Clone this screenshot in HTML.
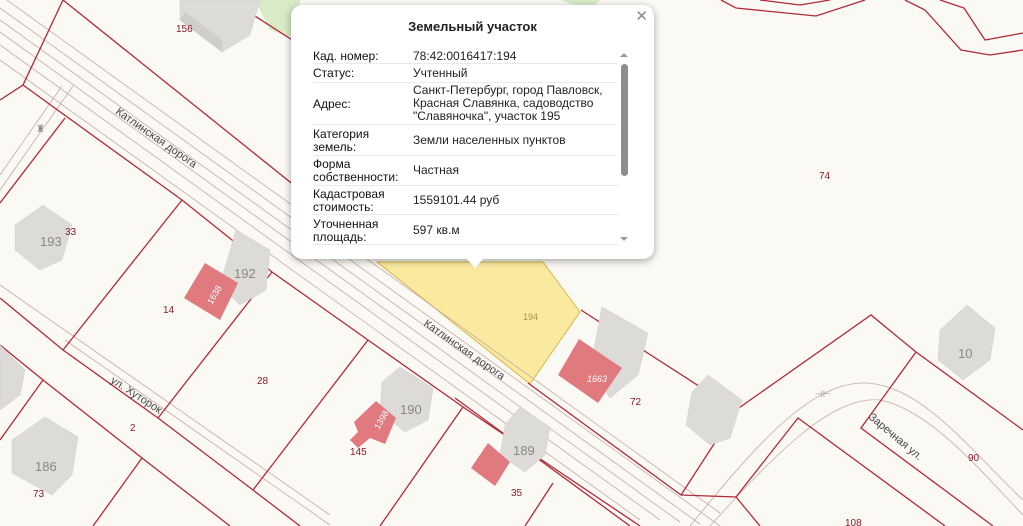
<!DOCTYPE html>
<html><head><meta charset="utf-8"><style>
body{margin:0;width:1023px;height:526px;overflow:hidden;background:#fbf9f3;font-family:"Liberation Sans",sans-serif;}
.pop{position:absolute;left:291px;top:5px;width:363px;height:254px;background:#fff;border-radius:11px;box-shadow:0 2px 8px rgba(0,0,0,.35);}
.pop .t{position:absolute;top:14px;left:0;width:100%;text-align:center;font-weight:bold;font-size:13px;color:#222;}
.pop .x{position:absolute;right:6px;top:2px;font-size:15px;color:#888;}
.row{position:absolute;left:22px;width:305px;border-bottom:1px solid #eceae6;font-size:12px;color:#222;line-height:13px;}
.row .l{position:absolute;left:0;color:#111;}
.row .v{position:absolute;left:100px;}
.tri{position:absolute;left:466px;top:258px;width:0;height:0;border-left:9px solid transparent;border-right:9px solid transparent;border-top:10px solid #fff;}
</style></head><body>
<svg width="1023" height="526" style="position:absolute;left:0;top:0" font-family="Liberation Sans, sans-serif">
<path d="M255,0 L300,0 L300,40 L270,30Z" fill="#d7ebc6"/>
<path d="M560,0 L600,0 L590,10Z" fill="#d7ebc6"/>
<polygon points="377,262 543,262 580,312 530,384" fill="#f9eaa0" stroke="#d8b84a" stroke-width="1"/>
<g stroke="#c9a8aa" stroke-width="0.8" fill="none">
<line x1="0" y1="-5" x2="720" y2="513"/>
<line x1="0" y1="8" x2="720" y2="526"/>
<line x1="0" y1="20" x2="700" y2="524"/>
<line x1="0" y1="32" x2="680" y2="522"/>
<line x1="0" y1="45" x2="660" y2="520"/>
<line x1="0" y1="60" x2="640" y2="520"/>
<line x1="73" y1="86" x2="0" y2="190"/>
<line x1="62" y1="86" x2="0" y2="175"/>
<line x1="0" y1="285" x2="330" y2="515"/>
<line x1="65" y1="340" x2="330" y2="525"/>
<path d="M690,526 C760,440 820,370 880,385 C930,395 980,460 1023,500"/>
<path d="M710,526 C770,460 830,395 880,400 C930,410 980,470 1023,515"/>
</g>
<g stroke="#b02a38" stroke-width="1.3" fill="none">
<polyline points="0,100 23,85 63,0"/>
<line x1="63" y1="0" x2="300" y2="190"/>
<line x1="230" y1="0" x2="300" y2="45"/>
<line x1="65" y1="118" x2="0" y2="203"/>
<polyline points="23,85 182,200 272,272 368,340 463,407 640,526"/>
<line x1="182" y1="200" x2="63" y2="350"/>
<line x1="272" y1="272" x2="158" y2="418"/>
<line x1="368" y1="340" x2="253" y2="490"/>
<line x1="463" y1="407" x2="380" y2="526"/>
<line x1="553" y1="483" x2="525" y2="526"/>
<polyline points="0,298 63,350 158,418 253,490 300,526"/>
<polyline points="0,345 43,380 142,458 230,526"/>
<line x1="43" y1="380" x2="0" y2="440"/>
<line x1="142" y1="458" x2="93" y2="526"/>
<line x1="455" y1="398" x2="630" y2="526"/>
<polyline points="528,383 681,495 736,497 760,526"/>
<polyline points="581,310 736,410 871,315 916,352 1023,430"/>
<line x1="736" y1="410" x2="681" y2="495"/>
<polyline points="736,497 798,418 945,526"/>
<polyline points="916,352 861,428 993,526"/>
<polyline points="721,0 736,8 816,16 865,0"/>
<polyline points="760,0 800,5 830,0"/>
<polyline points="940,0 964,8 985,40 1023,33"/>
<polyline points="905,0 925,10 961,50 990,55 1023,50"/>
</g>
<g fill="#dcdbd8" stroke="#d0cfcc" stroke-width="0.5">
<polygon points="180,0 260,0 250,35 222,52 180,20"/><polygon points="180,20 222,52 222,40 185,12" fill="#cfcecb"/>
<polygon points="43,205 72,225 62,260 40,270 15,250 15,225"/>
<polygon points="236,230 270,250 266,290 240,305 220,285"/>
<polygon points="0,345 25,370 20,395 0,410"/>
<polygon points="45,417 78,437 72,475 52,495 12,473 12,440"/>
<polygon points="400,367 433,388 428,420 405,432 380,412 382,382"/>
<polygon points="520,407 550,427 545,455 525,472 500,455 505,425"/>
<polygon points="602,307 648,333 638,375 610,398 590,370"/>
<polygon points="708,375 742,400 730,438 710,445 686,425 692,392"/>
<polygon points="967,305 995,328 990,360 963,380 938,360 940,330"/>
</g>
<g fill="#e07a7e">
<polygon points="205,263 238,283 220,320 184,298"/>
<polygon points="376,401 396,418 385,444 370,438 358,448 350,440 358,432 354,422"/>
<polygon points="488,443 510,462 495,486 471,468"/>
<polygon points="579,339 622,368 598,403 558,375"/>
</g>
<g font-size="10" fill="#8a1a2a">
<text x="176" y="32">156</text><text x="65" y="235">33</text><text x="163" y="313">14</text>
<text x="257" y="384">28</text><text x="130" y="431">2</text><text x="33" y="497">73</text>
<text x="350" y="455">145</text><text x="511" y="496">35</text><text x="630" y="405">72</text>
<text x="819" y="179">74</text><text x="968" y="461">90</text><text x="845" y="526">108</text>
</g>
<text x="523" y="320" font-size="9" fill="#b09040">194</text>
<g font-size="13" fill="#8a8884">
<text x="40" y="246">193</text><text x="234" y="278">192</text><text x="400" y="414">190</text>
<text x="513" y="455">189</text><text x="35" y="471">186</text><text x="958" y="358">10</text>
</g>
<g font-size="9" fill="#fff">
<text x="212" y="305" transform="rotate(-60 212 305)">1638</text>
<text x="379" y="430" transform="rotate(-60 379 430)">1398</text>
<text x="587" y="382" font-style="italic">1663</text>
</g>
<g font-size="11" fill="#444">
<text x="115" y="113" transform="rotate(35 115 113)">Катлинская дорога</text>
<text x="423" y="325" transform="rotate(35 423 325)">Катлинская дорога</text>
<text x="110" y="382" transform="rotate(33 110 382)">ул. Хуторок</text>
<text x="868" y="418" transform="rotate(40 868 418)">Заречная ул.</text>
</g>
<text x="36" y="132" font-size="10" fill="#888">♜</text>
<text x="815" y="397" font-size="9" fill="#888">⊣⊢</text>
</svg>
<div class="pop">
<div class="t">Земельный участок</div>
<div class="x">✕</div>
<div class="row" style="top:45px;height:13px"><span class="l" style="top:0">Кад. номер:</span><span class="v">78:42:0016417:194</span></div>
<div class="row" style="top:62px;height:15px"><span class="l">Статус:</span><span class="v">Учтенный</span></div>
<div class="row" style="top:79px;height:40px"><span class="l" style="top:14px">Адрес:</span><span class="v">Санкт-Петербург, город Павловск,<br>Красная Славянка, садоводство<br>"Славяночка", участок 195</span></div>
<div class="row" style="top:123px;height:27px"><span class="l">Категория<br>земель:</span><span class="v" style="top:6px">Земли населенных пунктов</span></div>
<div class="row" style="top:153px;height:27px"><span class="l">Форма<br>собственности:</span><span class="v" style="top:6px">Частная</span></div>
<div class="row" style="top:183px;height:26px"><span class="l">Кадастровая<br>стоимость:</span><span class="v" style="top:6px">1559101.44 руб</span></div>
<div class="row" style="top:213px;height:26px"><span class="l">Уточненная<br>площадь:</span><span class="v" style="top:6px">597 кв.м</span></div>
<div style="position:absolute;left:329px;top:48px;border-left:4px solid transparent;border-right:4px solid transparent;border-bottom:4px solid #999"></div>
<div style="position:absolute;left:330px;top:59px;width:7px;height:112px;background:#8d8d8d;border-radius:4px"></div>
<div style="position:absolute;left:329px;top:232px;border-left:4px solid transparent;border-right:4px solid transparent;border-top:4px solid #999"></div>
</div>
<div class="tri"></div>
</body></html>
